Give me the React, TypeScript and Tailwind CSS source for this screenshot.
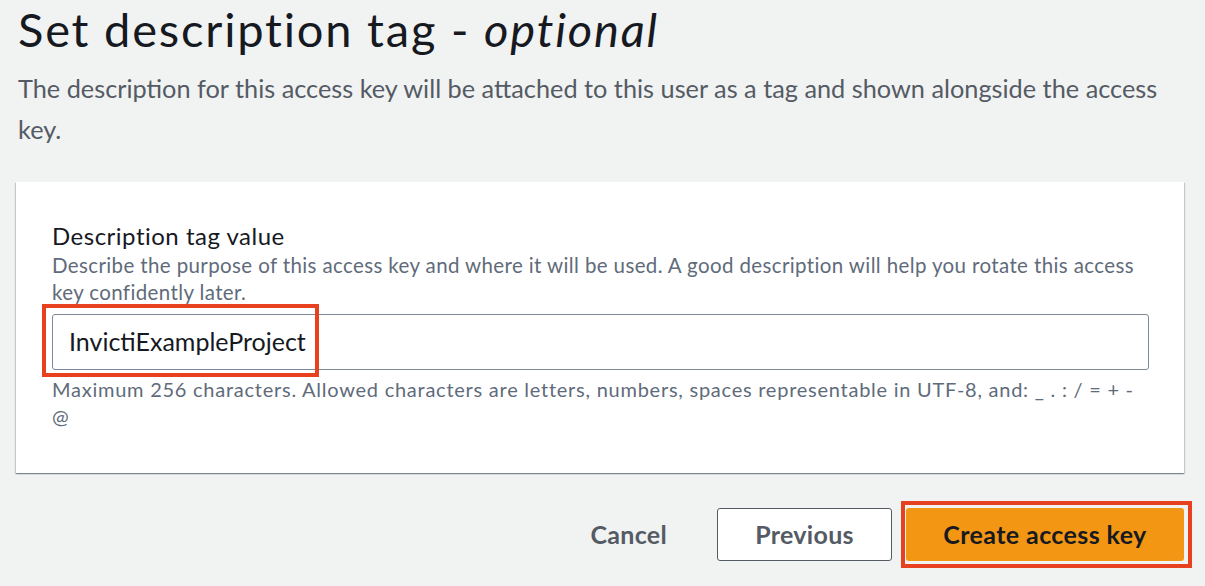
export default function App() {
  const font = { fontFamily: "Lato, 'Open Sans', sans-serif" };
  return (
    <div className="h-[586px] w-[1205px] overflow-hidden bg-[#f1f2f2] pl-[16px] pr-[21px] text-[#16191f]" style={font}>
      <h1 className="pl-[2px] text-[47px] leading-[58px] tracking-[1.8px] font-normal text-[#16191f]">
        Set description tag - <i>optional</i>
      </h1>
      <p className="mt-[10px] pl-[2px] pr-[8px] text-[25.3px] leading-[41px] text-[#545b64]">
        The description for this access key will be attached to this user as a tag and shown alongside the access key.
      </p>

      <div className="mt-[32px] w-[1168px] bg-white pt-[38px] pb-[43px] pl-[36px] pr-[35px] shadow-[0_1px_1px_0_rgba(0,28,36,0.3),1px_1px_1px_0_rgba(0,28,36,0.15),-1px_1px_1px_0_rgba(0,28,36,0.15)]">
        <label className="block text-[24px] leading-[32px] tracking-[0.5px] text-[#16191f]">Description tag value</label>
        <p className="text-[20.5px] leading-[27px] tracking-[0.38px] text-[#5f6b7a]">
          Describe the purpose of this access key and where it will be used. A good description will help you rotate this access key confidently later.
        </p>
        <div className="relative mt-[8px]">
          <div className="flex h-[56px] items-center rounded-[3px] border border-[#7d8998] bg-white pl-[16px] text-[25px] text-[#16191f]">
            InvictiExampleProject
          </div>
          <span className="absolute -left-[10px] -top-[10px] h-[73px] w-[277px] border-[4px] border-[#e8411f]" />
        </div>
        <p className="mt-[6px] text-[20px] leading-[27px] tracking-[0.75px] text-[#5f6b7a]">
          Maximum 256 characters. Allowed characters are letters, numbers, spaces representable in UTF-8, and: _ . : / = + - @
        </p>
      </div>

      <div className="mt-[35px] flex w-[1168px] items-center justify-end">
        <button type="button" className="mr-[50px] text-[25px] tracking-[0.3px] font-bold text-[#545b64]">Cancel</button>
        <button
          type="button"
          className="h-[53px] w-[175px] rounded-[3px] border border-[#545b64] bg-white text-[25px] tracking-[0.3px] font-bold text-[#545b64]"
        >
          Previous
        </button>
        <div className="relative ml-[14px]">
          <button
            type="button"
            className="h-[53px] w-[278px] rounded-[3px] bg-[#f29613] text-[25px] tracking-[0.4px] font-bold text-[#16191f]"
          >
            Create access key
          </button>
          <span className="absolute -left-[5px] -top-[7px] h-[67px] w-[291px] border-[4px] border-[#e8411f]" />
        </div>
      </div>
    </div>
  );
}
